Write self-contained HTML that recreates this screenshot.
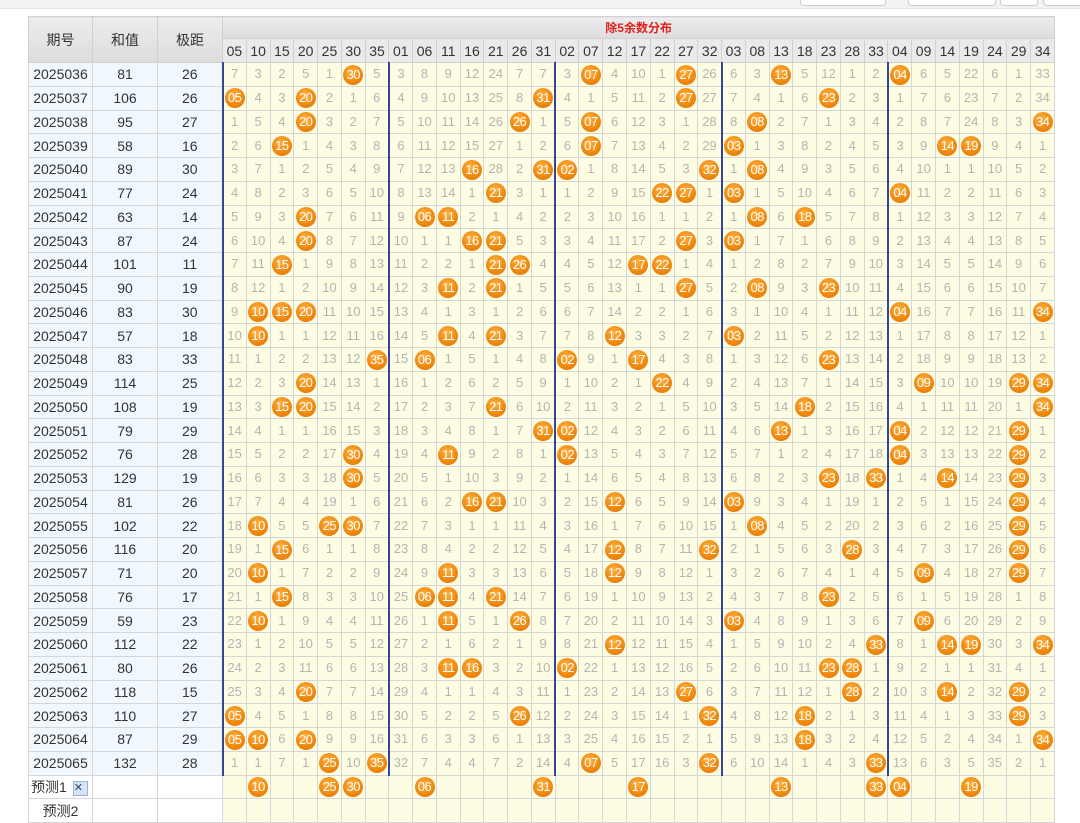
<!DOCTYPE html>
<html><head><meta charset="utf-8">
<style>
body{margin:0;width:1080px;height:816px;overflow:hidden;background:#fff;font-family:"Liberation Sans","Noto Sans CJK SC",sans-serif;position:relative}
.top{position:absolute;left:0;top:0;width:1080px;height:8px;background:#f2f2f2;border-bottom:1px solid #e4e4e4}
.bx{position:absolute;top:-6px;height:10px;background:#fff;border:1px solid #ccc;border-radius:4px}
table{position:absolute;left:28px;top:16px;border-collapse:collapse;table-layout:fixed;width:1026px}
td{border:1px solid #d6d6d6;padding:0;text-align:center;font-size:13px;color:#b4b4b4;background:#fdfde4;white-space:nowrap;overflow:visible;height:22.75px;line-height:20px}
td.q,td.v{background:#f0f8fe;color:#333;font-size:14px}
th{border:1px solid #d0d0d0;background:linear-gradient(#ededed,#dcdcdc);font-weight:normal;font-size:14px;color:#333;padding:0}
th.t{color:#e0201a;font-weight:bold;height:21px;font-size:12px}
th.h{height:23px;background:#eaeaea;font-size:14px}
td.g{border-left:2px solid #34449a}
i{display:inline-block;width:20px;height:20px;border-radius:50%;background:radial-gradient(circle at 45% 35%,#ffb040,#f08a10 55%,#e27000);color:#fff;font-style:normal;font-size:13px;line-height:20px;letter-spacing:-0.5px;vertical-align:middle}
td.w{background:#fff}
.x{display:inline-block;width:13px;height:13px;background:#d6e4fa;border:1px solid #9bb2dd;color:#345;font-size:11px;line-height:13px;margin-left:6px;vertical-align:middle}
</style></head><body>
<div class="top"><div class="bx" style="left:800px;width:84px"></div><div class="bx" style="left:908px;width:86px"></div><div class="bx" style="left:1000px;width:36px"></div><div class="bx" style="left:1043px;width:40px"></div></div>
<table>
<colgroup><col style="width:64px"><col style="width:65px"><col style="width:65px">
<col span="35" style="width:23.77px"></colgroup>
<tr><th rowspan="2">期号</th><th rowspan="2">和值</th><th rowspan="2">极距</th><th colspan="35" class="t">除5余数分布</th></tr>
<tr><th class="h">05</th><th class="h">10</th><th class="h">15</th><th class="h">20</th><th class="h">25</th><th class="h">30</th><th class="h">35</th><th class="h">01</th><th class="h">06</th><th class="h">11</th><th class="h">16</th><th class="h">21</th><th class="h">26</th><th class="h">31</th><th class="h">02</th><th class="h">07</th><th class="h">12</th><th class="h">17</th><th class="h">22</th><th class="h">27</th><th class="h">32</th><th class="h">03</th><th class="h">08</th><th class="h">13</th><th class="h">18</th><th class="h">23</th><th class="h">28</th><th class="h">33</th><th class="h">04</th><th class="h">09</th><th class="h">14</th><th class="h">19</th><th class="h">24</th><th class="h">29</th><th class="h">34</th></tr>
<tr><td class="q">2025036</td><td class="v">81</td><td class="v">26</td><td class="g">7</td><td>3</td><td>2</td><td>5</td><td>1</td><td><i>30</i></td><td>5</td><td class="g">3</td><td>8</td><td>9</td><td>12</td><td>24</td><td>7</td><td>7</td><td class="g">3</td><td><i>07</i></td><td>4</td><td>10</td><td>1</td><td><i>27</i></td><td>26</td><td class="g">6</td><td>3</td><td><i>13</i></td><td>5</td><td>12</td><td>1</td><td>2</td><td class="g"><i>04</i></td><td>6</td><td>5</td><td>22</td><td>6</td><td>1</td><td>33</td></tr>
<tr><td class="q">2025037</td><td class="v">106</td><td class="v">26</td><td class="g"><i>05</i></td><td>4</td><td>3</td><td><i>20</i></td><td>2</td><td>1</td><td>6</td><td class="g">4</td><td>9</td><td>10</td><td>13</td><td>25</td><td>8</td><td><i>31</i></td><td class="g">4</td><td>1</td><td>5</td><td>11</td><td>2</td><td><i>27</i></td><td>27</td><td class="g">7</td><td>4</td><td>1</td><td>6</td><td><i>23</i></td><td>2</td><td>3</td><td class="g">1</td><td>7</td><td>6</td><td>23</td><td>7</td><td>2</td><td>34</td></tr>
<tr><td class="q">2025038</td><td class="v">95</td><td class="v">27</td><td class="g">1</td><td>5</td><td>4</td><td><i>20</i></td><td>3</td><td>2</td><td>7</td><td class="g">5</td><td>10</td><td>11</td><td>14</td><td>26</td><td><i>26</i></td><td>1</td><td class="g">5</td><td><i>07</i></td><td>6</td><td>12</td><td>3</td><td>1</td><td>28</td><td class="g">8</td><td><i>08</i></td><td>2</td><td>7</td><td>1</td><td>3</td><td>4</td><td class="g">2</td><td>8</td><td>7</td><td>24</td><td>8</td><td>3</td><td><i>34</i></td></tr>
<tr><td class="q">2025039</td><td class="v">58</td><td class="v">16</td><td class="g">2</td><td>6</td><td><i>15</i></td><td>1</td><td>4</td><td>3</td><td>8</td><td class="g">6</td><td>11</td><td>12</td><td>15</td><td>27</td><td>1</td><td>2</td><td class="g">6</td><td><i>07</i></td><td>7</td><td>13</td><td>4</td><td>2</td><td>29</td><td class="g"><i>03</i></td><td>1</td><td>3</td><td>8</td><td>2</td><td>4</td><td>5</td><td class="g">3</td><td>9</td><td><i>14</i></td><td><i>19</i></td><td>9</td><td>4</td><td>1</td></tr>
<tr><td class="q">2025040</td><td class="v">89</td><td class="v">30</td><td class="g">3</td><td>7</td><td>1</td><td>2</td><td>5</td><td>4</td><td>9</td><td class="g">7</td><td>12</td><td>13</td><td><i>16</i></td><td>28</td><td>2</td><td><i>31</i></td><td class="g"><i>02</i></td><td>1</td><td>8</td><td>14</td><td>5</td><td>3</td><td><i>32</i></td><td class="g">1</td><td><i>08</i></td><td>4</td><td>9</td><td>3</td><td>5</td><td>6</td><td class="g">4</td><td>10</td><td>1</td><td>1</td><td>10</td><td>5</td><td>2</td></tr>
<tr><td class="q">2025041</td><td class="v">77</td><td class="v">24</td><td class="g">4</td><td>8</td><td>2</td><td>3</td><td>6</td><td>5</td><td>10</td><td class="g">8</td><td>13</td><td>14</td><td>1</td><td><i>21</i></td><td>3</td><td>1</td><td class="g">1</td><td>2</td><td>9</td><td>15</td><td><i>22</i></td><td><i>27</i></td><td>1</td><td class="g"><i>03</i></td><td>1</td><td>5</td><td>10</td><td>4</td><td>6</td><td>7</td><td class="g"><i>04</i></td><td>11</td><td>2</td><td>2</td><td>11</td><td>6</td><td>3</td></tr>
<tr><td class="q">2025042</td><td class="v">63</td><td class="v">14</td><td class="g">5</td><td>9</td><td>3</td><td><i>20</i></td><td>7</td><td>6</td><td>11</td><td class="g">9</td><td><i>06</i></td><td><i>11</i></td><td>2</td><td>1</td><td>4</td><td>2</td><td class="g">2</td><td>3</td><td>10</td><td>16</td><td>1</td><td>1</td><td>2</td><td class="g">1</td><td><i>08</i></td><td>6</td><td><i>18</i></td><td>5</td><td>7</td><td>8</td><td class="g">1</td><td>12</td><td>3</td><td>3</td><td>12</td><td>7</td><td>4</td></tr>
<tr><td class="q">2025043</td><td class="v">87</td><td class="v">24</td><td class="g">6</td><td>10</td><td>4</td><td><i>20</i></td><td>8</td><td>7</td><td>12</td><td class="g">10</td><td>1</td><td>1</td><td><i>16</i></td><td><i>21</i></td><td>5</td><td>3</td><td class="g">3</td><td>4</td><td>11</td><td>17</td><td>2</td><td><i>27</i></td><td>3</td><td class="g"><i>03</i></td><td>1</td><td>7</td><td>1</td><td>6</td><td>8</td><td>9</td><td class="g">2</td><td>13</td><td>4</td><td>4</td><td>13</td><td>8</td><td>5</td></tr>
<tr><td class="q">2025044</td><td class="v">101</td><td class="v">11</td><td class="g">7</td><td>11</td><td><i>15</i></td><td>1</td><td>9</td><td>8</td><td>13</td><td class="g">11</td><td>2</td><td>2</td><td>1</td><td><i>21</i></td><td><i>26</i></td><td>4</td><td class="g">4</td><td>5</td><td>12</td><td><i>17</i></td><td><i>22</i></td><td>1</td><td>4</td><td class="g">1</td><td>2</td><td>8</td><td>2</td><td>7</td><td>9</td><td>10</td><td class="g">3</td><td>14</td><td>5</td><td>5</td><td>14</td><td>9</td><td>6</td></tr>
<tr><td class="q">2025045</td><td class="v">90</td><td class="v">19</td><td class="g">8</td><td>12</td><td>1</td><td>2</td><td>10</td><td>9</td><td>14</td><td class="g">12</td><td>3</td><td><i>11</i></td><td>2</td><td><i>21</i></td><td>1</td><td>5</td><td class="g">5</td><td>6</td><td>13</td><td>1</td><td>1</td><td><i>27</i></td><td>5</td><td class="g">2</td><td><i>08</i></td><td>9</td><td>3</td><td><i>23</i></td><td>10</td><td>11</td><td class="g">4</td><td>15</td><td>6</td><td>6</td><td>15</td><td>10</td><td>7</td></tr>
<tr><td class="q">2025046</td><td class="v">83</td><td class="v">30</td><td class="g">9</td><td><i>10</i></td><td><i>15</i></td><td><i>20</i></td><td>11</td><td>10</td><td>15</td><td class="g">13</td><td>4</td><td>1</td><td>3</td><td>1</td><td>2</td><td>6</td><td class="g">6</td><td>7</td><td>14</td><td>2</td><td>2</td><td>1</td><td>6</td><td class="g">3</td><td>1</td><td>10</td><td>4</td><td>1</td><td>11</td><td>12</td><td class="g"><i>04</i></td><td>16</td><td>7</td><td>7</td><td>16</td><td>11</td><td><i>34</i></td></tr>
<tr><td class="q">2025047</td><td class="v">57</td><td class="v">18</td><td class="g">10</td><td><i>10</i></td><td>1</td><td>1</td><td>12</td><td>11</td><td>16</td><td class="g">14</td><td>5</td><td><i>11</i></td><td>4</td><td><i>21</i></td><td>3</td><td>7</td><td class="g">7</td><td>8</td><td><i>12</i></td><td>3</td><td>3</td><td>2</td><td>7</td><td class="g"><i>03</i></td><td>2</td><td>11</td><td>5</td><td>2</td><td>12</td><td>13</td><td class="g">1</td><td>17</td><td>8</td><td>8</td><td>17</td><td>12</td><td>1</td></tr>
<tr><td class="q">2025048</td><td class="v">83</td><td class="v">33</td><td class="g">11</td><td>1</td><td>2</td><td>2</td><td>13</td><td>12</td><td><i>35</i></td><td class="g">15</td><td><i>06</i></td><td>1</td><td>5</td><td>1</td><td>4</td><td>8</td><td class="g"><i>02</i></td><td>9</td><td>1</td><td><i>17</i></td><td>4</td><td>3</td><td>8</td><td class="g">1</td><td>3</td><td>12</td><td>6</td><td><i>23</i></td><td>13</td><td>14</td><td class="g">2</td><td>18</td><td>9</td><td>9</td><td>18</td><td>13</td><td>2</td></tr>
<tr><td class="q">2025049</td><td class="v">114</td><td class="v">25</td><td class="g">12</td><td>2</td><td>3</td><td><i>20</i></td><td>14</td><td>13</td><td>1</td><td class="g">16</td><td>1</td><td>2</td><td>6</td><td>2</td><td>5</td><td>9</td><td class="g">1</td><td>10</td><td>2</td><td>1</td><td><i>22</i></td><td>4</td><td>9</td><td class="g">2</td><td>4</td><td>13</td><td>7</td><td>1</td><td>14</td><td>15</td><td class="g">3</td><td><i>09</i></td><td>10</td><td>10</td><td>19</td><td><i>29</i></td><td><i>34</i></td></tr>
<tr><td class="q">2025050</td><td class="v">108</td><td class="v">19</td><td class="g">13</td><td>3</td><td><i>15</i></td><td><i>20</i></td><td>15</td><td>14</td><td>2</td><td class="g">17</td><td>2</td><td>3</td><td>7</td><td><i>21</i></td><td>6</td><td>10</td><td class="g">2</td><td>11</td><td>3</td><td>2</td><td>1</td><td>5</td><td>10</td><td class="g">3</td><td>5</td><td>14</td><td><i>18</i></td><td>2</td><td>15</td><td>16</td><td class="g">4</td><td>1</td><td>11</td><td>11</td><td>20</td><td>1</td><td><i>34</i></td></tr>
<tr><td class="q">2025051</td><td class="v">79</td><td class="v">29</td><td class="g">14</td><td>4</td><td>1</td><td>1</td><td>16</td><td>15</td><td>3</td><td class="g">18</td><td>3</td><td>4</td><td>8</td><td>1</td><td>7</td><td><i>31</i></td><td class="g"><i>02</i></td><td>12</td><td>4</td><td>3</td><td>2</td><td>6</td><td>11</td><td class="g">4</td><td>6</td><td><i>13</i></td><td>1</td><td>3</td><td>16</td><td>17</td><td class="g"><i>04</i></td><td>2</td><td>12</td><td>12</td><td>21</td><td><i>29</i></td><td>1</td></tr>
<tr><td class="q">2025052</td><td class="v">76</td><td class="v">28</td><td class="g">15</td><td>5</td><td>2</td><td>2</td><td>17</td><td><i>30</i></td><td>4</td><td class="g">19</td><td>4</td><td><i>11</i></td><td>9</td><td>2</td><td>8</td><td>1</td><td class="g"><i>02</i></td><td>13</td><td>5</td><td>4</td><td>3</td><td>7</td><td>12</td><td class="g">5</td><td>7</td><td>1</td><td>2</td><td>4</td><td>17</td><td>18</td><td class="g"><i>04</i></td><td>3</td><td>13</td><td>13</td><td>22</td><td><i>29</i></td><td>2</td></tr>
<tr><td class="q">2025053</td><td class="v">129</td><td class="v">19</td><td class="g">16</td><td>6</td><td>3</td><td>3</td><td>18</td><td><i>30</i></td><td>5</td><td class="g">20</td><td>5</td><td>1</td><td>10</td><td>3</td><td>9</td><td>2</td><td class="g">1</td><td>14</td><td>6</td><td>5</td><td>4</td><td>8</td><td>13</td><td class="g">6</td><td>8</td><td>2</td><td>3</td><td><i>23</i></td><td>18</td><td><i>33</i></td><td class="g">1</td><td>4</td><td><i>14</i></td><td>14</td><td>23</td><td><i>29</i></td><td>3</td></tr>
<tr><td class="q">2025054</td><td class="v">81</td><td class="v">26</td><td class="g">17</td><td>7</td><td>4</td><td>4</td><td>19</td><td>1</td><td>6</td><td class="g">21</td><td>6</td><td>2</td><td><i>16</i></td><td><i>21</i></td><td>10</td><td>3</td><td class="g">2</td><td>15</td><td><i>12</i></td><td>6</td><td>5</td><td>9</td><td>14</td><td class="g"><i>03</i></td><td>9</td><td>3</td><td>4</td><td>1</td><td>19</td><td>1</td><td class="g">2</td><td>5</td><td>1</td><td>15</td><td>24</td><td><i>29</i></td><td>4</td></tr>
<tr><td class="q">2025055</td><td class="v">102</td><td class="v">22</td><td class="g">18</td><td><i>10</i></td><td>5</td><td>5</td><td><i>25</i></td><td><i>30</i></td><td>7</td><td class="g">22</td><td>7</td><td>3</td><td>1</td><td>1</td><td>11</td><td>4</td><td class="g">3</td><td>16</td><td>1</td><td>7</td><td>6</td><td>10</td><td>15</td><td class="g">1</td><td><i>08</i></td><td>4</td><td>5</td><td>2</td><td>20</td><td>2</td><td class="g">3</td><td>6</td><td>2</td><td>16</td><td>25</td><td><i>29</i></td><td>5</td></tr>
<tr><td class="q">2025056</td><td class="v">116</td><td class="v">20</td><td class="g">19</td><td>1</td><td><i>15</i></td><td>6</td><td>1</td><td>1</td><td>8</td><td class="g">23</td><td>8</td><td>4</td><td>2</td><td>2</td><td>12</td><td>5</td><td class="g">4</td><td>17</td><td><i>12</i></td><td>8</td><td>7</td><td>11</td><td><i>32</i></td><td class="g">2</td><td>1</td><td>5</td><td>6</td><td>3</td><td><i>28</i></td><td>3</td><td class="g">4</td><td>7</td><td>3</td><td>17</td><td>26</td><td><i>29</i></td><td>6</td></tr>
<tr><td class="q">2025057</td><td class="v">71</td><td class="v">20</td><td class="g">20</td><td><i>10</i></td><td>1</td><td>7</td><td>2</td><td>2</td><td>9</td><td class="g">24</td><td>9</td><td><i>11</i></td><td>3</td><td>3</td><td>13</td><td>6</td><td class="g">5</td><td>18</td><td><i>12</i></td><td>9</td><td>8</td><td>12</td><td>1</td><td class="g">3</td><td>2</td><td>6</td><td>7</td><td>4</td><td>1</td><td>4</td><td class="g">5</td><td><i>09</i></td><td>4</td><td>18</td><td>27</td><td><i>29</i></td><td>7</td></tr>
<tr><td class="q">2025058</td><td class="v">76</td><td class="v">17</td><td class="g">21</td><td>1</td><td><i>15</i></td><td>8</td><td>3</td><td>3</td><td>10</td><td class="g">25</td><td><i>06</i></td><td><i>11</i></td><td>4</td><td><i>21</i></td><td>14</td><td>7</td><td class="g">6</td><td>19</td><td>1</td><td>10</td><td>9</td><td>13</td><td>2</td><td class="g">4</td><td>3</td><td>7</td><td>8</td><td><i>23</i></td><td>2</td><td>5</td><td class="g">6</td><td>1</td><td>5</td><td>19</td><td>28</td><td>1</td><td>8</td></tr>
<tr><td class="q">2025059</td><td class="v">59</td><td class="v">23</td><td class="g">22</td><td><i>10</i></td><td>1</td><td>9</td><td>4</td><td>4</td><td>11</td><td class="g">26</td><td>1</td><td><i>11</i></td><td>5</td><td>1</td><td><i>26</i></td><td>8</td><td class="g">7</td><td>20</td><td>2</td><td>11</td><td>10</td><td>14</td><td>3</td><td class="g"><i>03</i></td><td>4</td><td>8</td><td>9</td><td>1</td><td>3</td><td>6</td><td class="g">7</td><td><i>09</i></td><td>6</td><td>20</td><td>29</td><td>2</td><td>9</td></tr>
<tr><td class="q">2025060</td><td class="v">112</td><td class="v">22</td><td class="g">23</td><td>1</td><td>2</td><td>10</td><td>5</td><td>5</td><td>12</td><td class="g">27</td><td>2</td><td>1</td><td>6</td><td>2</td><td>1</td><td>9</td><td class="g">8</td><td>21</td><td><i>12</i></td><td>12</td><td>11</td><td>15</td><td>4</td><td class="g">1</td><td>5</td><td>9</td><td>10</td><td>2</td><td>4</td><td><i>33</i></td><td class="g">8</td><td>1</td><td><i>14</i></td><td><i>19</i></td><td>30</td><td>3</td><td><i>34</i></td></tr>
<tr><td class="q">2025061</td><td class="v">80</td><td class="v">26</td><td class="g">24</td><td>2</td><td>3</td><td>11</td><td>6</td><td>6</td><td>13</td><td class="g">28</td><td>3</td><td><i>11</i></td><td><i>16</i></td><td>3</td><td>2</td><td>10</td><td class="g"><i>02</i></td><td>22</td><td>1</td><td>13</td><td>12</td><td>16</td><td>5</td><td class="g">2</td><td>6</td><td>10</td><td>11</td><td><i>23</i></td><td><i>28</i></td><td>1</td><td class="g">9</td><td>2</td><td>1</td><td>1</td><td>31</td><td>4</td><td>1</td></tr>
<tr><td class="q">2025062</td><td class="v">118</td><td class="v">15</td><td class="g">25</td><td>3</td><td>4</td><td><i>20</i></td><td>7</td><td>7</td><td>14</td><td class="g">29</td><td>4</td><td>1</td><td>1</td><td>4</td><td>3</td><td>11</td><td class="g">1</td><td>23</td><td>2</td><td>14</td><td>13</td><td><i>27</i></td><td>6</td><td class="g">3</td><td>7</td><td>11</td><td>12</td><td>1</td><td><i>28</i></td><td>2</td><td class="g">10</td><td>3</td><td><i>14</i></td><td>2</td><td>32</td><td><i>29</i></td><td>2</td></tr>
<tr><td class="q">2025063</td><td class="v">110</td><td class="v">27</td><td class="g"><i>05</i></td><td>4</td><td>5</td><td>1</td><td>8</td><td>8</td><td>15</td><td class="g">30</td><td>5</td><td>2</td><td>2</td><td>5</td><td><i>26</i></td><td>12</td><td class="g">2</td><td>24</td><td>3</td><td>15</td><td>14</td><td>1</td><td><i>32</i></td><td class="g">4</td><td>8</td><td>12</td><td><i>18</i></td><td>2</td><td>1</td><td>3</td><td class="g">11</td><td>4</td><td>1</td><td>3</td><td>33</td><td><i>29</i></td><td>3</td></tr>
<tr><td class="q">2025064</td><td class="v">87</td><td class="v">29</td><td class="g"><i>05</i></td><td><i>10</i></td><td>6</td><td><i>20</i></td><td>9</td><td>9</td><td>16</td><td class="g">31</td><td>6</td><td>3</td><td>3</td><td>6</td><td>1</td><td>13</td><td class="g">3</td><td>25</td><td>4</td><td>16</td><td>15</td><td>2</td><td>1</td><td class="g">5</td><td>9</td><td>13</td><td><i>18</i></td><td>3</td><td>2</td><td>4</td><td class="g">12</td><td>5</td><td>2</td><td>4</td><td>34</td><td>1</td><td><i>34</i></td></tr>
<tr><td class="q">2025065</td><td class="v">132</td><td class="v">28</td><td class="g">1</td><td>1</td><td>7</td><td>1</td><td><i>25</i></td><td>10</td><td><i>35</i></td><td class="g">32</td><td>7</td><td>4</td><td>4</td><td>7</td><td>2</td><td>14</td><td class="g">4</td><td><i>07</i></td><td>5</td><td>17</td><td>16</td><td>3</td><td><i>32</i></td><td class="g">6</td><td>10</td><td>14</td><td>1</td><td>4</td><td>3</td><td><i>33</i></td><td class="g">13</td><td>6</td><td>3</td><td>5</td><td>35</td><td>2</td><td>1</td></tr>
<tr><td class="w" style="color:#333;text-align:left;padding-left:2px;font-size:14px">预测1<span class="x">✕</span></td><td class="w"></td><td class="w"></td><td></td><td><i>10</i></td><td></td><td></td><td><i>25</i></td><td><i>30</i></td><td></td><td></td><td><i>06</i></td><td></td><td></td><td></td><td></td><td><i>31</i></td><td></td><td></td><td></td><td><i>17</i></td><td></td><td></td><td></td><td></td><td></td><td><i>13</i></td><td></td><td></td><td></td><td><i>33</i></td><td><i>04</i></td><td></td><td></td><td><i>19</i></td><td></td><td></td><td></td></tr>
<tr><td class="w" style="color:#333;font-size:14px">预测2</td><td class="w"></td><td class="w"></td><td></td><td></td><td></td><td></td><td></td><td></td><td></td><td></td><td></td><td></td><td></td><td></td><td></td><td></td><td></td><td></td><td></td><td></td><td></td><td></td><td></td><td></td><td></td><td></td><td></td><td></td><td></td><td></td><td></td><td></td><td></td><td></td><td></td><td></td><td></td></tr>
</table>
</body></html>
